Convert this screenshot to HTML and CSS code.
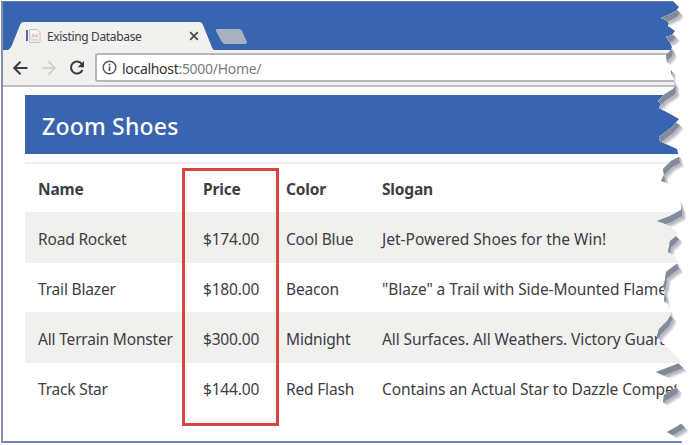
FILE: index.html
```
<!DOCTYPE html>
<html lang="en">
<head>
<meta charset="utf-8">
<title>Existing Database</title>
<link rel="stylesheet" href="styles.css">
</head>
<body>
<div class="window">
  <header class="titlebar">
    <div class="tab">
      <svg class="tab-shape" width="206" height="28" viewBox="0 0 206 28"><path d="M0 28C2 27 3 25 4 23L12 3Q13 0 16 0H191Q194 0 195 3L203 23Q204 27 206 28Z" fill="#f1f1f0"/></svg>
      <svg class="favicon" width="16" height="16" viewBox="0 0 16 16"><path d="M2 2V13" stroke="#4c6fa8" stroke-width="2"/><path d="M4.500 1.500H12L15 4.500V14.500H4.500Z" fill="#f6f2f1" stroke="#c6c1c3"/><path d="M6 9H8V6L10 9L12 6V10M6 12H13" fill="none" stroke="#d3b8b8"/></svg>
      <span class="tab-title">Existing Database</span>
      <svg class="close" width="10" height="10" viewBox="0 0 10 10"><path d="M1.200 1.200L8.800 8.800M8.800 1.200L1.200 8.800" stroke="#444" stroke-width="1.700"/></svg>
    </div>
    <svg class="new-tab" width="34" height="15" viewBox="0 0 34 15"><path d="M2 0H24Q26 0 27 2L32 13Q32 15 30 15H10Q8 15 7 13L1 2Q0 0 2 0Z" fill="#a7b1c2"/></svg>
  </header>
  <nav class="toolbar">
    <svg width="88" height="36" viewBox="0 0 88 36" fill="none">
      <path d="M24.500 18H11.500M17.500 11.700L11.200 18L17.500 24.300" stroke="#3b3b3b" stroke-width="2"/>
      <path d="M39 18H51.500M45.500 11.700L51.800 18L45.500 24.300" stroke="#d3c8ca" stroke-width="1.700"/>
      <path d="M79 14.200A6 6 0 1 0 79.500 20" stroke="#3b3b3b" stroke-width="2"/><path d="M81 11V17.300H74.700Z" fill="#3b3b3b"/>
    </svg>
    <div class="address">
      <svg width="15" height="15" viewBox="0 0 15 15"><circle cx="7.500" cy="7.500" r="6.300" fill="none" stroke="#555" stroke-width="1.500"/><path d="M7.500 6.500V11M7.500 3.700V5.400" stroke="#555" stroke-width="1.700"/></svg>
      <span class="url"><b>localhost</b>:5000/Home/</span>
    </div>
  </nav>
  <main>
    <h1>Zoom Shoes</h1>
    <div class="table">
      <div class="row head"><span>Name</span><span>Price</span><span>Color</span><span>Slogan</span></div>
      <div class="row odd"><span>Road Rocket</span><span>$174.00</span><span>Cool Blue</span><span class="loose">Jet-Powered Shoes for the Win!</span></div>
      <div class="row"><span>Trail Blazer</span><span>$180.00</span><span>Beacon</span><span class="medium">"Blaze" a Trail with Side-Mounted Flame</span></div>
      <div class="row odd"><span>All Terrain Monster</span><span>$300.00</span><span>Midnight</span><span class="medium">All Surfaces. All Weathers. Victory Guara</span></div>
      <div class="row"><span>Track Star</span><span>$144.00</span><span>Red Flash</span><span class="medium">Contains an Actual Star to Dazzle Compet</span></div>
    </div>
  </main>
</div>
<div class="highlight"></div>
<svg class="tear" width="690" height="445" viewBox="0 0 690 445">
  <defs>
    <path id="edge" d="M600 -20L673 1L679 7L676 11L670 14L661 18L666 20L669 23L668 26L675 31L672 35L666 37L670 42L672 47L671 50L666 55L667 62L671 65L671 73L674 79L675 86L673 89L665 94L658 101L661 104L659 108L672 115L679 119L672 127L659 137L660 141L668 145L677 149L679 157L671 161L663 169L664 175L661 181L667 183L670 187L678 195L681 204L681 210L670 216L657 221L663 223L670 226L678 233L674 238L670 241L668 252L674 255L678 263L671 268L666 272L665 280L663 286L665 292L664 301L668 304L669 310L672 312L668 320L659 329L657 336L660 340L667 347L682 362L672 366L656 372L669 378L677 383L676 388L664 395L663 402L669 406L676 413L684 422L676 427L667 432L674 436L682 442L600 465Z"/>
    <clipPath id="outside"><path d="M673 1L679 7L676 11L670 14L661 18L666 20L669 23L668 26L675 31L672 35L666 37L670 42L672 47L671 50L666 55L667 62L671 65L671 73L674 79L675 86L673 89L665 94L658 101L661 104L659 108L672 115L679 119L672 127L659 137L660 141L668 145L677 149L679 157L671 161L663 169L664 175L661 181L667 183L670 187L678 195L681 204L681 210L670 216L657 221L663 223L670 226L678 233L674 238L670 241L668 252L674 255L678 263L671 268L666 272L665 280L663 286L665 292L664 301L668 304L669 310L672 312L668 320L659 329L657 336L660 340L667 347L682 362L672 366L656 372L669 378L677 383L676 388L664 395L663 402L669 406L676 413L684 422L676 427L667 432L674 436L682 442V445H690V0H673Z"/></clipPath>
    <clipPath id="shade-area"><rect y="6" width="690" height="432"/></clipPath>
  </defs>
  <g clip-path="url(#outside)">
    <rect x="640" width="50" height="445" fill="#fff"/>
    <g clip-path="url(#shade-area)">
      <use href="#edge" x="5" y="10" fill="#eee8e9"/>
      <use href="#edge" x="4" y="9" fill="#d5ced3"/>
      <use href="#edge" x="3" y="8" fill="#b3bac8"/>
      <use href="#edge" x="1" y="6" fill="#838b98"/>
    </g>
  </g>
</svg>
</body>
</html>
```
FILE: styles.css
```
* { box-sizing: border-box; }
body {
  margin: 0;
  width: 690px;
  height: 445px;
  overflow: hidden;
  position: relative;
  background: #fff;
  font-family: "Noto Sans", sans-serif;
  color: #3d3d42;
}
.window {
  margin: 1px 0 0 1px;
  width: 689px;
  height: 442px;
  border-left: 2px solid #8491a8;
  border-bottom: 2px solid #7187b0;
  border-top: 1px solid #657da8;
  overflow: hidden;
}
.titlebar {
  display: flex;
  height: 48px;
  padding: 20px 0 0 5px;
  background: #3964af;
}
.tab {
  position: relative;
  display: flex;
  align-items: center;
  width: 206px;
  height: 28px;
  padding-left: 17px;
}
.tab-shape { position: absolute; left: 0; top: 0; }
.favicon, .tab-title, .close { position: relative; }
.tab-title {
  width: 134px;
  margin-left: 6px;
  font-size: 12px;
  letter-spacing: -0.35px;
  white-space: nowrap;
}
.close { margin-left: 8px; }
.new-tab { margin: 7px 0 0 1px; }
.toolbar {
  display: flex;
  align-items: center;
  height: 37px;
  background: #f1f1f0;
  border-bottom: 2px solid #bec0c6;
}
.toolbar > svg { flex: none; }
.address {
  flex: 1;
  display: flex;
  align-items: center;
  height: 29px;
  margin-left: 4px;
  padding: 0 0 1px 5px;
  background: #fff;
  border: 2px solid #b8b6bb;
  border-right: 0;
  border-radius: 3px 0 0 3px;
}
.url { margin-left: 5px; padding-top: 2px; font-size: 14px; letter-spacing: -0.3px; color: #7b7c82; }
.url b { font-weight: 400; color: #333; }
main { padding: 8px 0 0 22px; }
h1 {
  margin: 0;
  height: 59px;
  padding: 2px 0 0 17px;
  line-height: 58px;
  background: #3964af;
  color: #fff;
  font-size: 23px;
  font-weight: 500;
  letter-spacing: 0.2px;
}
.table { margin-top: 8px; border-top: 2px solid #eeeeee; }
.row {
  display: grid;
  grid-template-columns: 165px 83px 96px 1fr;
  align-items: center;
  height: 49px;
  padding: 2px 0 0 13px;
  font-size: 15.5px;
  letter-spacing: -0.18px;
  white-space: nowrap;
}
.row.head { font-weight: 700; height: 48px; }
.row.odd { background: #f0f0ef; height: 51px; }
.row .loose { letter-spacing: 0; }
.row .medium { letter-spacing: -0.09px; }
.highlight {
  position: absolute;
  left: 182px;
  top: 168px;
  width: 97px;
  height: 258px;
  border: 3px solid #d9443f;
}
.tear { position: absolute; left: 0; top: 0; }
```
